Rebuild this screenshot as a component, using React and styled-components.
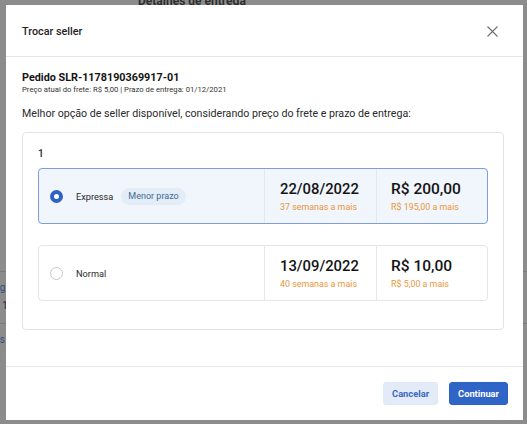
import React from "react";
import styled, { createGlobalStyle } from "styled-components";

const GlobalStyle = createGlobalStyle`
  html, body { margin: 0; padding: 0; }
  body { font-family: Roboto, "Noto Sans", Inter, sans-serif; color: #1f1f1f; }
  * { box-sizing: border-box; }
`;

const Screen = styled.div`
  position: relative;
  width: 527px;
  height: 424px;
  overflow: hidden;
  background: #8c8c8c;
`;

const BehindPage = styled.div`
  display: flex;
  flex-direction: column;
  height: 100%;
`;

const BehindTitle = styled.div`
  margin: -6px 0 0 138px;
  font-size: 12px;
  font-weight: 700;
  color: #2e2e2e;
  white-space: nowrap;
`;

const BehindList = styled.div`
  margin-top: 263px;
  display: flex;
  flex-direction: column;
`;

const BehindRow = styled.div`
  height: 52px;
  border-top: 1px solid #7a7a7a;
  padding: 10px 0 0 0;
  display: flex;
  flex-direction: column;
  gap: 7px;
  font-size: 10px;
  margin-left: -12px;
`;

const BehindLink = styled.span`
  color: #2f4f80;
`;
const BehindText = styled.span`
  color: #2a2a2a;
`;

const Modal = styled.div`
  position: absolute;
  left: 6px;
  top: 5px;
  width: 517px;
  height: 415px;
  background: #ffffff;
  display: flex;
  flex-direction: column;
`;

const Header = styled.div`
  height: 52px;
  flex: none;
  display: flex;
  align-items: center;
  justify-content: space-between;
  padding: 2px 24px 0 16px;
  border-bottom: 1px solid #e6e6e6;
`;

const Title = styled.h2`
  margin: 0;
  font-size: 10.8px;
  font-weight: 500;
  color: #1f1f1f;
`;

const CloseButton = styled.button`
  border: 0;
  background: none;
  padding: 0;
  width: 14px;
  height: 14px;
  display: flex;
  align-items: center;
  justify-content: center;
`;

const Body = styled.div`
  flex: 1;
  padding: 12px 19px 0 16px;
  display: flex;
  flex-direction: column;
`;

const OrderTitle = styled.div`
  font-size: 10.8px;
  font-weight: 700;
  color: #141414;
  line-height: 15px;
  margin-top: 1px;
`;

const OrderMeta = styled.div`
  font-size: 7.7px;
  color: #333;
  line-height: 10px;
`;

const Lead = styled.p`
  margin: 12px 0 0 0;
  font-size: 10.65px;
  color: #2a2a2a;
  line-height: 14px;
`;

const OptionsBox = styled.div`
  margin-top: 11px;
  border: 1px solid #e3e3e3;
  border-radius: 4px;
  padding: 15px 15px 28px 15px;
  display: flex;
  flex-direction: column;
`;

const GroupLabel = styled.div`
  font-size: 10px;
  font-weight: 500;
  color: #1f1f1f;
  line-height: 12px;
  margin-bottom: 8px;
`;

const Cards = styled.div`
  display: flex;
  flex-direction: column;
  gap: 21px;
`;

const Card = styled.label`
  height: 56px;
  display: grid;
  grid-template-columns: 225px 112px 1fr;
  border: 1px solid ${(p) => (p.$selected ? "#7e9ddb" : "#e6e6e6")};
  background: ${(p) => (p.$selected ? "#f1f5fc" : "#ffffff")};
  border-radius: 4px;
  cursor: pointer;
`;

const Cell = styled.div`
  display: flex;
  align-items: ${(p) => (p.$stack ? "flex-start" : "center")};
  justify-content: ${(p) => (p.$stack ? "center" : "flex-start")};
  flex-direction: ${(p) => (p.$stack ? "column" : "row")};
  padding-left: ${(p) => p.$pad || 16}px;
  border-left: ${(p) => (p.$divider ? "1px solid #e4e7ec" : "none")};
`;

const Radio = styled.span`
  width: 13px;
  height: 13px;
  border-radius: 50%;
  flex: none;
  border: ${(p) => (p.$checked ? "4.5px solid #2e63c5" : "1px solid #c8c8c8")};
  background: #fff;
`;

const MethodName = styled.span`
  margin-left: 13px;
  font-size: 9.2px;
  color: #2a2a2a;
`;

const Badge = styled.span`
  margin-left: 8px;
  padding: 0 7px;
  height: 17px;
  border-radius: 9px;
  background: #e3edf7;
  color: #3f6a92;
  font-size: 9px;
  display: inline-flex;
  align-items: center;
`;

const BigValue = styled.div`
  font-size: ${(p) => p.$size}px;
  font-weight: 500;
  color: #141414;
  line-height: 19px;
`;

const Delta = styled.div`
  font-size: 8.9px;
  color: #e8973a;
  line-height: 11px;
  margin-top: 3px;
`;

const Footer = styled.div`
  height: 54px;
  flex: none;
  border-top: 1px solid #e8e8e8;
  display: flex;
  align-items: center;
  justify-content: flex-end;
  gap: 11px;
  padding: 0 15px 0 0;
`;

const Button = styled.button`
  height: 23px;
  padding: 0 8px;
  border-radius: 3px;
  border: 1px solid ${(p) => (p.$primary ? "#2c62c4" : "#e0e9f7")};
  background: ${(p) => (p.$primary ? "#2f65c6" : "#e3ebf8")};
  color: ${(p) => (p.$primary ? "#ffffff" : "#3b67bd")};
  font-family: inherit;
  font-size: 9.3px;
  font-weight: 700;
  cursor: pointer;
`;

const options = [
  {
    id: "expressa",
    name: "Expressa",
    badge: "Menor prazo",
    date: "22/08/2022",
    dateDelta: "37 semanas a mais",
    price: "R$ 200,00",
    priceDelta: "R$ 195,00 a mais",
    selected: true,
  },
  {
    id: "normal",
    name: "Normal",
    date: "13/09/2022",
    dateDelta: "40 semanas a mais",
    price: "R$ 10,00",
    priceDelta: "R$ 5,00 a mais",
    selected: false,
  },
];

export default function App() {
  return (
    <>
      <GlobalStyle />
      <Screen>
        <BehindPage>
          <BehindTitle>Detalhes de entrega</BehindTitle>
          <BehindList>
            <BehindRow>
              <BehindLink>Pag</BehindLink>
              <BehindText>R$ 10</BehindText>
            </BehindRow>
            <BehindRow>
              <BehindLink>Des</BehindLink>
              <BehindText>SB</BehindText>
            </BehindRow>
          </BehindList>
        </BehindPage>
        <Modal>
          <Header>
            <Title>Trocar seller</Title>
            <CloseButton aria-label="Fechar">
              <svg width="11" height="11" viewBox="0 0 11 11">
                <path d="M0.5 0.5 L10.5 10.5 M10.5 0.5 L0.5 10.5" stroke="#6f6f6f" strokeWidth="1.1" fill="none" />
              </svg>
            </CloseButton>
          </Header>
          <Body>
            <OrderTitle>Pedido SLR-1178190369917-01</OrderTitle>
            <OrderMeta>Preço atual do frete: R$ 5,00 | Prazo de entrega: 01/12/2021</OrderMeta>
            <Lead>Melhor opção de seller disponível, considerando preço do frete e prazo de entrega:</Lead>
            <OptionsBox>
              <GroupLabel>1</GroupLabel>
              <Cards>
                {options.map((o) => (
                  <Card key={o.id} $selected={o.selected}>
                    <Cell $pad={11}>
                      <Radio $checked={o.selected} />
                      <MethodName>{o.name}</MethodName>
                      {o.badge && <Badge>{o.badge}</Badge>}
                    </Cell>
                    <Cell $stack $divider $pad={15}>
                      <BigValue $size={14.8}>{o.date}</BigValue>
                      <Delta>{o.dateDelta}</Delta>
                    </Cell>
                    <Cell $stack $divider $pad={14}>
                      <BigValue $size={15.5}>{o.price}</BigValue>
                      <Delta>{o.priceDelta}</Delta>
                    </Cell>
                  </Card>
                ))}
              </Cards>
            </OptionsBox>
          </Body>
          <Footer>
            <Button>Cancelar</Button>
            <Button $primary>Continuar</Button>
          </Footer>
        </Modal>
      </Screen>
    </>
  );
}
